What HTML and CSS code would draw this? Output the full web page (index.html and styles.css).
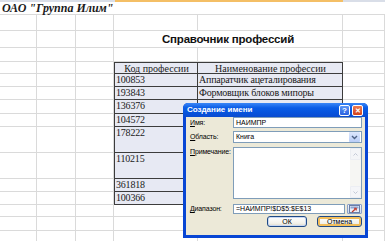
FILE: index.html
```html
<html>
	<head>
		<meta charset="utf-8">
		<title>Справочник профессий</title>
		<link rel="stylesheet" href="styles.css">
	</head>
	<body>
		<div class="strip"><span class="s-left"></span><span class="s-sel"></span><span class="s-right"></span></div>
		<div class="sheet">
			<div class="c head">ОАО "Группа Илим"</div>

			<div class="c"></div><div class="c"></div><div class="c"></div><div class="c"></div><div class="c"></div><div class="c"></div>

			<div class="c"></div><div class="c"></div><div class="c"></div>
			<div class="c caption">Справочник профессий</div>
			<div class="c"></div>

			<div class="c"></div><div class="c"></div><div class="c"></div><div class="c"></div><div class="c"></div><div class="c"></div>

			<div class="ref">
				<div class="th">Код профессии</div><div class="th">Наименование профессии</div>
				<div class="td">100853</div><div class="td">Аппаратчик ацеталирования</div>
				<div class="td">193843</div><div class="td">Формовщик блоков мипоры</div>
				<div class="td">136376</div><div class="td"></div>
				<div class="td">104572</div><div class="td"></div>
				<div class="td">178222</div><div class="td"></div>
				<div class="td">110215</div><div class="td"></div>
				<div class="td">361818</div><div class="td"></div>
				<div class="td">100366</div><div class="td"></div>
			</div>

			<div class="c"></div><div class="c"></div><div class="c"></div><div class="c"></div>
			<div class="c"></div><div class="c"></div><div class="c"></div><div class="c"></div>
			<div class="c"></div><div class="c"></div><div class="c"></div><div class="c"></div>
			<div class="c"></div><div class="c"></div><div class="c"></div><div class="c"></div>
			<div class="c"></div><div class="c"></div><div class="c"></div><div class="c"></div>
			<div class="c"></div><div class="c"></div><div class="c"></div><div class="c"></div>
			<div class="c"></div><div class="c"></div><div class="c"></div><div class="c"></div>
			<div class="c"></div><div class="c"></div><div class="c"></div><div class="c"></div>
			<div class="c"></div><div class="c"></div><div class="c"></div><div class="c"></div>

			<div class="c"></div><div class="c"></div><div class="c"></div><div class="c"></div><div class="c"></div><div class="c"></div>
			<div class="c"></div><div class="c"></div><div class="c"></div><div class="c"></div><div class="c"></div><div class="c"></div>
			<div class="c"></div><div class="c"></div><div class="c"></div><div class="c"></div><div class="c"></div><div class="c"></div>
		</div>

		<div class="dlg">
			<div class="dlg-title">
				<span class="dlg-name">Создание имени</span>
				<span class="tbtn help">?</span>
				<span class="tbtn close">✕</span>
			</div>
			<div class="dlg-body">
				<div class="field f-name">
					<div class="lbl"><u>И</u>мя:</div>
					<div class="inp">НАИМПР</div>
				</div>
				<div class="field f-scope">
					<div class="lbl"><u>О</u>бласть:</div>
					<div class="inp sel">
						<span class="val">Книга</span>
						<span class="drop"><svg width="7" height="5" viewBox="0 0 7 5"><path d="M1 1 L3.5 3.5 L6 1" fill="none" stroke="#4d6185" stroke-width="1.4"/></svg></span>
					</div>
				</div>
				<div class="field f-note">
					<div class="lbl"><u>П</u>римечание:</div>
					<div class="inp area">
						<span class="sbar">
							<span class="arr"><svg width="5" height="3" viewBox="0 0 5 3"><path d="M0.5 2.5 L2.5 0.5 L4.5 2.5" fill="none" stroke="#c3c8d6" stroke-width="1"/></svg></span>
							<span class="arr"><svg width="5" height="3" viewBox="0 0 5 3"><path d="M0.5 0.5 L2.5 2.5 L4.5 0.5" fill="none" stroke="#c3c8d6" stroke-width="1"/></svg></span>
						</span>
					</div>
				</div>
				<div class="field f-range">
					<div class="lbl"><u>Д</u>иапазон:</div>
					<div class="inp range">=НАИМПР!$D$5:$E$13</div>
					<span class="pick"><svg width="11" height="8" viewBox="0 0 11 8"><rect x="0.5" y="0.5" width="10" height="7" fill="#e8eef9" stroke="#6b7fa6"/><rect x="1.5" y="1.5" width="8" height="2" fill="#8ea6d4"/><path d="M3 7 L7 3.5" stroke="#c0392b" stroke-width="1.2"/><path d="M5 3.3 L7.4 3.2 L7.2 5.6" fill="none" stroke="#c0392b" stroke-width="1"/></svg></span>
				</div>
				<div class="btns">
					<span class="btn">ОК</span>
					<span class="btn cancel">Отмена</span>
				</div>
			</div>
		</div>
	</body>
</html>
```

FILE: styles.css
```css
body {
	margin: 0;
	width: 385px;
	height: 241px;
	overflow: hidden;
	position: relative;
	background: #fff;
	font-family: "Liberation Serif", serif;
	color: #1a1a1a;
}

.strip {
	display: flex;
	height: 2px;
}

.s-left {
	width: 115px;
	background: #d9dee8;
}

.s-sel {
	width: 228px;
	background: #f4bf66;
}

.s-right {
	flex: 1;
	background: #d9dee8;
}

.sheet {
	display: grid;
	grid-template-columns: 37px 39px 38px 84px 145px 42px;
	grid-template-rows: 13px 16px 17px 14px 12px 13px 13px 14px 13px 26px 26px 13px 13px 12px 14px 20px;
}

.c {
	box-sizing: border-box;
	border-right: 1px solid #dadada;
	border-bottom: 1px solid #dadada;
}

.head {
	grid-column: 1 / -1;
	border-right: none;
	font-size: 12px;
	font-weight: bold;
	font-style: italic;
	line-height: 13px;
	padding-left: 2px;
	white-space: nowrap;
}

.caption {
	grid-column: span 2;
	font-family: "Liberation Sans", sans-serif;
	font-weight: bold;
	font-size: 11.5px;
	letter-spacing: -0.2px;
	text-align: center;
	line-height: 17px;
	color: #111;
}

.ref {
	grid-column: 4 / 6;
	grid-row: 5 / 14;
	display: grid;
	grid-template-columns: 83px 145px;
	grid-template-rows: 11px 13px 13px 14px 13px 26px 26px 13px 13px;
	border-left: 1px solid #3c3c3c;
	border-top: 1px solid #3c3c3c;
	background: #e7e9f3;
	font-size: 10px;
	line-height: 12px;
}

.th, .td {
	box-sizing: border-box;
	border-right: 1px solid #3c3c3c;
	border-bottom: 1px solid #3c3c3c;
	padding-left: 1px;
	white-space: nowrap;
	overflow: hidden;
}

.td {
	letter-spacing: -0.2px;
}

.th {
	text-align: center;
	line-height: 11px;
}

/* dialog window */
.dlg {
	position: absolute;
	left: 183px;
	top: 103px;
	width: 185px;
	height: 135px;
	box-sizing: border-box;
	padding: 0 3px 3px;
	background: #0846d4;
	border-radius: 5px 5px 0 0;
	font-family: "Liberation Sans", sans-serif;
	font-size: 7px;
	line-height: 8px;
	color: #000;
}

.dlg-title {
	display: flex;
	align-items: center;
	gap: 2px;
	height: 14px;
	margin: 0 -3px;
	padding: 0 5px 0 4px;
	border-radius: 5px 5px 0 0;
	background: linear-gradient(#3a86f7, #0a5ce6 35%, #0753dc 70%, #0a4bd0);
}

.dlg-name {
	flex: 1;
	color: #fff;
	font-weight: bold;
	font-size: 8px;
	line-height: 10px;
	white-space: nowrap;
}

.tbtn {
	width: 11px;
	height: 11px;
	box-sizing: border-box;
	border: 1px solid #fff;
	border-radius: 2px;
	color: #fff;
	font-weight: bold;
	font-size: 8px;
	line-height: 9px;
	text-align: center;
}

.help {
	background: linear-gradient(#5b95f6, #2a62e0);
}

.close {
	background: linear-gradient(#eb7b52, #d2421b);
	font-size: 7px;
}

.dlg-body {
	height: 118px;
	box-sizing: border-box;
	padding: 0 3px 0 4px;
	background: #ece9d8;
	display: flex;
	flex-direction: column;
}

.field {
	display: flex;
	align-items: center;
}

.lbl {
	width: 43px;
	flex: none;
	white-space: nowrap;
	letter-spacing: -0.15px;
}

.inp {
	box-sizing: border-box;
	width: 129px;
	border: 1px solid #7f9db9;
	background: #fff;
	padding-left: 2px;
	white-space: nowrap;
	display: flex;
	align-items: center;
}

.f-name .inp {
	height: 11px;
}

.f-scope {
	margin-top: 3px;
}

.sel {
	height: 12px;
	justify-content: space-between;
	padding-right: 1px;
}

.drop {
	width: 11px;
	height: 10px;
	display: flex;
	align-items: center;
	justify-content: center;
	background: linear-gradient(#dce7fd, #b9cdf7);
	border-radius: 1px;
}

.f-note {
	margin-top: 4px;
	align-items: flex-start;
}

.f-note .lbl {
	padding-top: 1px;
}

.area {
	height: 52px;
	justify-content: flex-end;
	align-items: stretch;
	padding: 0;
}

.sbar {
	width: 11px;
	background: #f6f6f3;
	display: flex;
	flex-direction: column;
	justify-content: space-between;
}

.arr {
	height: 10px;
	display: flex;
	align-items: center;
	justify-content: center;
	background: #f4f5f8;
	border: 1px solid #eceef3;
	border-radius: 1px;
}

.f-range {
	margin-top: 5px;
}

.range {
	width: 112px;
	height: 10px;
}

.pick {
	margin-left: 2px;
	width: 15px;
	height: 10px;
	box-sizing: border-box;
	border: 1px solid #8aa0c8;
	border-radius: 1px;
	background: linear-gradient(#f3f6fc, #cdd9f0);
	display: flex;
	align-items: center;
	justify-content: center;
}

.btns {
	margin-top: 2px;
	display: flex;
	justify-content: flex-end;
	gap: 10px;
}

.btn {
	box-sizing: border-box;
	width: 40px;
	height: 11px;
	border: 1px solid #1f4a86;
	border-radius: 3px;
	background: linear-gradient(#ffffff, #f2f1ea 70%, #dcd8c6);
	box-shadow: inset 0 0 0 1px #c8d7f2;
	text-align: center;
	line-height: 9px;
}

.cancel {
	width: 45px;
	box-shadow: inset 0 0 0 2px #f3be5b;
}
```
